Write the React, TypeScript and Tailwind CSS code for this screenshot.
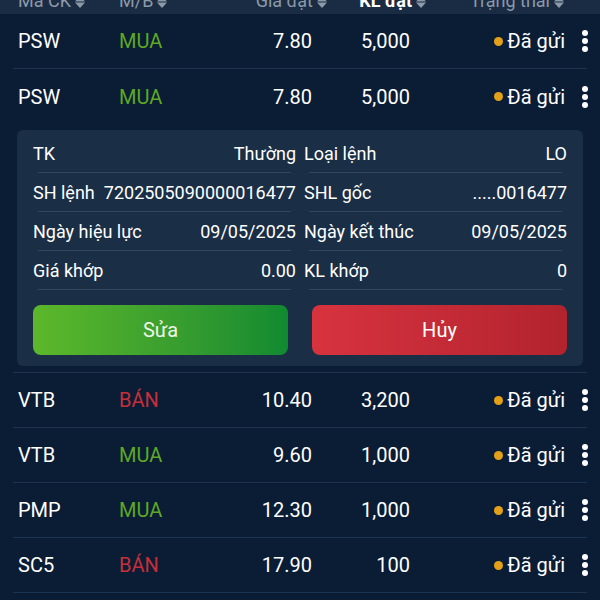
import React from "react";

type Order = {
    symbol: string;
    side: "MUA" | "BÁN";
    price: string;
    volume: string;
};

const orders: Order[] = [
    { symbol: "PSW", side: "MUA", price: "7.80", volume: "5,000" },
    { symbol: "PSW", side: "MUA", price: "7.80", volume: "5,000" },
    { symbol: "VTB", side: "BÁN", price: "10.40", volume: "3,200" },
    { symbol: "VTB", side: "MUA", price: "9.60", volume: "1,000" },
    { symbol: "PMP", side: "MUA", price: "12.30", volume: "1,000" },
    { symbol: "SC5", side: "BÁN", price: "17.90", volume: "100" },
];

const details = [
    ["TK", "Thường", "Loại lệnh", "LO"],
    ["SH lệnh", "7202505090000016477", "SHL gốc", ".....0016477"],
    ["Ngày hiệu lực", "09/05/2025", "Ngày kết thúc", "09/05/2025"],
    ["Giá khớp", "0.00", "KL khớp", "0"],
];

const SortIcon = () => (
    <svg width="10" height="12" viewBox="0 0 10 12" className="ml-1 inline-block">
        <path d="M5 0 L10 5.5 L0 5.5 Z M5 12 L10 6.5 L0 6.5 Z" fill="#8b99a9" />
    </svg>
);

const Kebab = () => (
    <svg width="8" height="24" viewBox="0 0 8 24">
        <circle cx="4" cy="4" r="3" fill="#ffffff" />
        <circle cx="4" cy="12" r="3" fill="#ffffff" />
        <circle cx="4" cy="20" r="3" fill="#ffffff" />
    </svg>
);

const OrderRow = ({ order, last }: { order: Order; last?: boolean }) => (
    <div className={`mx-[13px] h-[55px] flex items-center text-[20px] ${last ? "" : "border-b border-[#1d3450]"}`}>
        <div className="w-[106px] shrink-0 pl-[5px] text-white">{order.symbol}</div>
        <div className={`w-[93px] shrink-0 ${order.side === "MUA" ? "text-[#5da824]" : "text-[#c62f3a]"}`}>
            {order.side}
        </div>
        <div className="w-[100px] shrink-0 text-right text-white">{order.price}</div>
        <div className="w-[98px] shrink-0 text-right text-white">{order.volume}</div>
        <div className="w-[155px] shrink-0 flex items-center justify-end text-white">
            <span className="w-[9px] h-[9px] rounded-full bg-[#e3a11a] mr-[4px]"></span>
            Đã gửi
        </div>
        <div className="w-[8px] shrink-0 ml-[16px] flex justify-center">
            <Kebab />
        </div>
    </div>
);

export default function App() {
    return (
        <div className="w-[600px] h-[600px] overflow-hidden bg-[#0b1d35] font-['Roboto',sans-serif]">
            {/* header, scrolled so only the lower half shows */}
            <div className="h-[14px] overflow-hidden bg-[#1a2c43]">
                <div className="-mt-[13px] h-[27px] flex items-center text-[18px] text-[#8b99a9]">
                    <div className="w-[119px] shrink-0 pl-[18px]">Mã CK<SortIcon /></div>
                    <div className="w-[88px] shrink-0">M/B<SortIcon /></div>
                    <div className="w-[120px] shrink-0 text-right">Giá đặt<SortIcon /></div>
                    <div className="w-[99px] shrink-0 text-right font-bold text-white">KL đặt<SortIcon /></div>
                    <div className="w-[138px] shrink-0 text-right">Trạng thái<SortIcon /></div>
                </div>
            </div>

            <OrderRow order={orders[0]} />
            <OrderRow order={orders[1]} last />

            <div className="mx-[13px] pt-[6px] pb-[6px] border-b border-[#1d3450]">
                <div className="mx-[4px] rounded-[6px] bg-[#1a2e46] px-4 pt-1 pb-[11px] text-[18px] text-white">
                    {details.map((d, i) => (
                        <div key={i} className="grid grid-cols-2 gap-2">
                            <div className="h-[39px] flex flex-col">
                                <div className="flex-1 flex items-center justify-between">
                                    <span>{d[0]}</span>
                                    <span>{d[1]}</span>
                                </div>
                                <div className="mx-[5px] h-px bg-[#33475e]"></div>
                            </div>
                            <div className="h-[39px] flex flex-col">
                                <div className="flex-1 flex items-center justify-between">
                                    <span>{d[2]}</span>
                                    <span>{d[3]}</span>
                                </div>
                                <div className="mx-[5px] h-px bg-[#33475e]"></div>
                            </div>
                        </div>
                    ))}
                    <div className="grid grid-cols-2 gap-6 mt-[15px]">
                        <button className="h-[50px] rounded-[8px] bg-gradient-to-r from-[#5cb82a] to-[#0f8a30] text-[20px] text-[#eef6e8]">
                            Sửa
                        </button>
                        <button className="h-[50px] rounded-[8px] bg-gradient-to-r from-[#d7333f] to-[#b2232e] text-[20px] text-white">
                            Hủy
                        </button>
                    </div>
                </div>
            </div>

            {orders.slice(2).map((o, i) => (
                <OrderRow key={i} order={o} />
            ))}
        </div>
    );
}
